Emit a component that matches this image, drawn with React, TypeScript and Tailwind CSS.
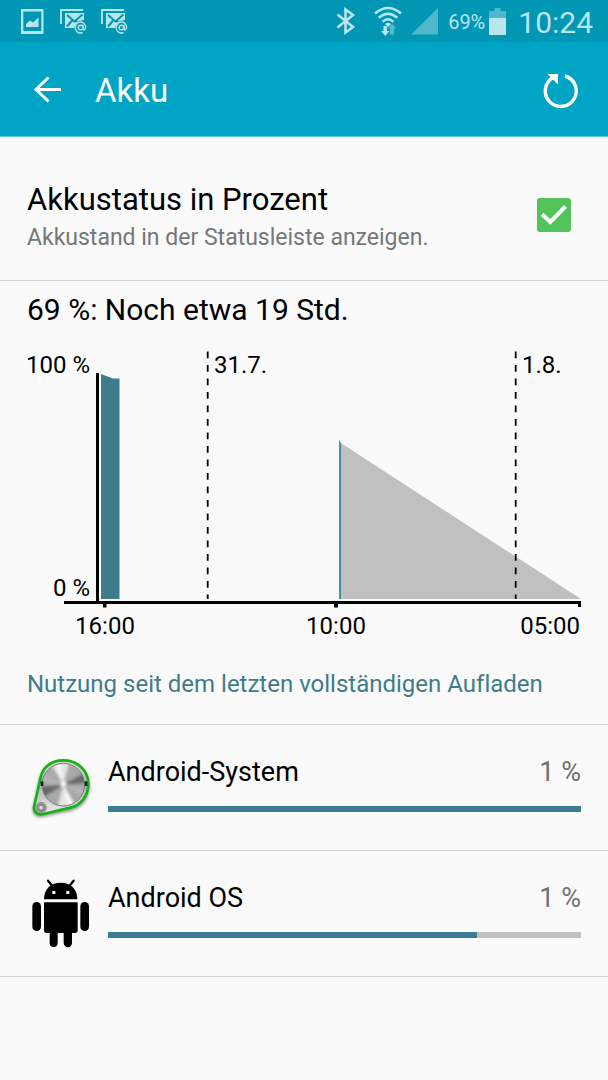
import type { ReactNode } from "react";

function PictureIcon() {
  return (
    <svg viewBox="0 0 23 26" className="h-[26px] w-[23px]" aria-hidden="true">
      <path fill="#b9e5ec" fillRule="evenodd" d="M0 0h22.5v25H0zM2.300 2.500v19.500h18V2.500z" />
      <path fill="#b9e5ec" d="M5 18v-3l4-3.500 3 2L17.500 8.500V18z" />
    </svg>
  );
}

function MailIcon() {
  return (
    <svg viewBox="0 0 27 26" className="h-[26px] w-[27px]" aria-hidden="true">
      <path d="M1 15V1h22" fill="none" stroke="#b9e5ec" strokeWidth="1.800" />
      <path d="M5 4h19v7l-5 1-4 4-1 3H5z" fill="#b9e5ec" />
      <path d="M7 6l7.500 6.500L22.500 5.500M7 17.500l5.500-6.500M15.500 11l1.500 2" fill="none" stroke="#0096b4" strokeWidth="2" />
      <circle cx="20.500" cy="18.500" r="2.300" fill="none" stroke="#b9e5ec" strokeWidth="1.400" />
      <path
        d="M23 15.800v4c0 2 2.600 1.500 2.600-1.500a5.200 5.500 0 1 0-3 5.200"
        fill="none"
        stroke="#b9e5ec"
        strokeWidth="1.400"
      />
    </svg>
  );
}

function BluetoothIcon() {
  return (
    <svg viewBox="0 0 20 28" className="h-7 w-5" aria-hidden="true">
      <path d="M1.500 7.500L17 20l-7.500 5.500v-23L17 8 1.500 20.500" fill="none" stroke="#b9e5ec" strokeWidth="2.600" />
    </svg>
  );
}

function WifiIcon() {
  return (
    <svg viewBox="0 0 28 30" className="h-[30px] w-7" aria-hidden="true">
      <g fill="none" stroke="#b9e5ec" strokeWidth="2.500">
        <path d="M1 7.500q13-11 26 0" />
        <path d="M4.800 11.700q9.200-8 18.400 0" />
        <path d="M8.500 15.800q5.500-5 11 0" />
      </g>
      <path d="M11 18q3-2.500 6 0l-3 3z" fill="#b9e5ec" />
      <path d="M9.500 20h3.500v5h2.500L11.200 30 7 25h2.500z" fill="#b9e5ec" />
      <path d="M18 17.500l4.300 5H20v6h-4v-6h-2z" fill="#56b9cd" />
    </svg>
  );
}

function SignalIcon() {
  return (
    <svg viewBox="0 0 27 27" className="h-[27px] w-[27px]" aria-hidden="true">
      <path d="M0 26.500L27 0v26.500z" fill="#4fb8cc" />
    </svg>
  );
}

function BatteryIcon() {
  return (
    <svg viewBox="0 0 17 27" className="h-[27px] w-[17px]" aria-hidden="true">
      <path d="M0 3h5.500V0h6v3H17v8H0z" fill="#4fb8cc" />
      <path d="M0 10h17v17H0z" fill="#b9e5ec" />
    </svg>
  );
}

function StatusBar() {
  return (
    <div className="flex h-[42px] items-center justify-between bg-[#0096b4] pr-[15px] pl-[21px] text-[#b9e5ec]">
      <div className="flex items-center gap-4 pt-0.5">
        <PictureIcon />
        <div className="flex gap-3.5">
          <MailIcon />
          <MailIcon />
        </div>
      </div>
      <div className="flex items-center">
        <BluetoothIcon />
        <span className="ml-[18px]">
          <WifiIcon />
        </span>
        <span className="ml-[9px]">
          <SignalIcon />
        </span>
        <span className="ml-2.5 pt-0.5 text-[20px] leading-none">69%</span>
        <span className="ml-1">
          <BatteryIcon />
        </span>
        <span className="ml-3 pt-1 text-[30px] leading-none">10:24</span>
      </div>
    </div>
  );
}

function AppBar() {
  return (
    <header className="flex h-[95px] items-center border-b border-[#5cc3d8] bg-[#00a5c6] pt-1 pr-7 pl-8 text-white">
      <button type="button" aria-label="Zurück">
        <svg viewBox="0 0 32 32" className="h-8 w-8" aria-hidden="true">
          <path d="M29 14.500H4M16.500 2.500L4 14.500l12.500 12" fill="none" stroke="white" strokeWidth="3" />
        </svg>
      </button>
      <h1 className="ml-[31px] flex-1 text-[33px] leading-10">Akku</h1>
      <button type="button" aria-label="Aktualisieren">
        <svg viewBox="0 0 38 38" className="h-[38px] w-[38px]" aria-hidden="true">
          <path d="M23 4A15.500 15.500 0 1 1 11 5.500" fill="none" stroke="white" strokeWidth="3.400" />
          <path d="M5.500 2H16V12.500z" fill="white" />
        </svg>
      </button>
    </header>
  );
}

function PercentSetting() {
  return (
    <label className="flex h-[144px] items-center justify-between border-b border-[#d0d0d0] pr-[37px] pl-[27px]">
      <span className="mt-[18px]">
        <span className="block text-[31px] leading-10 text-black">Akkustatus in Prozent</span>
        <span className="block text-[23px] leading-9 text-[#757779]">Akkustand in der Statusleiste anzeigen.</span>
      </span>
      <span className="relative mt-3 h-[34px] w-[34px] shrink-0">
        <input
          type="checkbox"
          defaultChecked
          className="peer block h-[34px] w-[34px] appearance-none rounded-[3px] border-2 border-gray-400 checked:border-[#53c45a] checked:bg-[#53c45a]"
        />
        <svg
          viewBox="0 0 34 34"
          className="pointer-events-none absolute inset-0 hidden h-full w-full peer-checked:block"
          aria-hidden="true"
        >
          <path d="M5 16.200l8.300 7.800L28.500 8.500" fill="none" stroke="white" strokeWidth="4" />
        </svg>
      </span>
    </label>
  );
}

function BatteryChart() {
  return (
    <svg
      viewBox="0 0 608 304"
      className="block w-full text-[24px]"
      role="img"
      aria-label="Akkuverlauf"
      fill="black"
    >
      <path d="M101 34l12 4.500h6.500V259H101z" fill="#3f7c8b" />
      <path d="M340 102.500L581 259H340z" fill="#c0c0c0" />
      <path d="M339.200 100l1.600 3V259h-1.600z" fill="#1d7b92" />
      <path d="M96 33h3v230h-3z" />
      <path d="M64 261h517v6h-3v-3H338v3.500h-4V264H106.500v3.500H103V264H64z" />
      <path d="M207.700 11.500V259M515.700 11.500V259" stroke="black" strokeWidth="1.800" strokeDasharray="6.800 6.700" />
      <text x="90" y="33" textAnchor="end">100 %</text>
      <text x="90" y="256" textAnchor="end">0 %</text>
      <text x="214" y="33">31.7.</text>
      <text x="522" y="33">1.8.</text>
      <text x="105" y="294" textAnchor="middle">16:00</text>
      <text x="336" y="294" textAnchor="middle">10:00</text>
      <text x="580" y="294" textAnchor="end">05:00</text>
    </svg>
  );
}

function SystemIcon() {
  return (
    <svg viewBox="24 36 192 216" className="h-[72px] w-16 shrink-0" aria-hidden="true">
      <defs>
        <filter id="soft" x="-30%" y="-30%" width="160%" height="160%">
          <feGaussianBlur stdDeviation="5" />
        </filter>
        <clipPath id="disc">
          <circle cx="130" cy="134" r="63" />
        </clipPath>
        <linearGradient id="plate" x1="0" y1="0" x2="0" y2="1">
          <stop offset="0" stopColor="#e2e2e2" />
          <stop offset="0.5" stopColor="#b4b4b4" />
          <stop offset="1" stopColor="#eeeeee" />
        </linearGradient>
        <radialGradient id="knob">
          <stop offset="0" stopColor="#ffffff" />
          <stop offset="0.6" stopColor="#777777" />
          <stop offset="1" stopColor="#cccccc" />
        </radialGradient>
      </defs>
      <path
        d="M60 116C67 82 94 61 130 61c43 0 76 32 76 72 0 34-22 62-54 71l-85 18c-16 4-27-7-25-21z"
        fill="#666666"
        stroke="#666666"
        strokeWidth="8"
        filter="url(#soft)"
        opacity="0.7"
        transform="translate(0 5)"
      />
      <path
        d="M62 113C68 82 94 61 130 61c43 0 75 32 75 71 0 35-22 63-54 71l-81 19c-17 4-30-5-28-21z"
        fill="url(#plate)"
        stroke="#12b412"
        strokeWidth="8"
      />
      <g clipPath="url(#disc)">
        <rect x="65" y="70" width="130" height="130" fill="#a8a8a8" />
        <g filter="url(#soft)">
          <path d="M130 134L200 95V128zM130 134L60 140V178z" fill="#686868" />
          <path d="M130 134L60 95V125zM130 134L200 150V175z" fill="#b5b5b5" />
          <path d="M130 134L85 60H150zM130 134L110 210H175z" fill="#e4e4e4" />
          <path d="M130 134L105 60H118zM130 134L150 210H168z" fill="#ffffff" />
        </g>
        <circle cx="130" cy="132" r="8" fill="#ffffff" filter="url(#soft)" />
      </g>
      <circle cx="130" cy="134" r="64" fill="none" stroke="#777777" strokeWidth="3" />
      <path d="M66 124v14M198 124v14" stroke="#222222" strokeWidth="8" />
      <circle cx="63" cy="203" r="16" fill="url(#knob)" stroke="#666666" strokeWidth="2" />
    </svg>
  );
}

function RobotIcon() {
  return (
    <svg viewBox="24 54 192 216" className="h-[72px] w-16 shrink-0" aria-hidden="true">
      <path d="M84 62l13 16M161 62l-13 16" stroke="black" strokeWidth="7" strokeLinecap="round" />
      <path d="M72 118c0-32 21-50 50-50s50 18 50 50z" />
      <rect x="97" y="93" width="9" height="9" fill="white" />
      <rect x="139" y="93" width="9" height="9" fill="white" />
      <path d="M72 127h101v84q0 8-8 8h-9v30a12.500 12.500 0 0 1-25 0v-30h-18v30a12 12 0 0 1-24 0v-30h-9q-8 0-8-8z" />
      <rect x="37" y="126" width="26" height="87" rx="13" />
      <rect x="181" y="126" width="26" height="87" rx="13" />
    </svg>
  );
}

type UsageRowProps = { icon: ReactNode; name: string; percent: string; share: number };

function UsageRow({ icon, name, percent, share }: UsageRowProps) {
  return (
    <li className="flex h-[126px] items-center gap-4 border-b border-[#d0d0d0] pr-[27px] pl-7">
      {icon}
      <div className="flex-1 pb-2">
        <div className="flex justify-between text-[27px] leading-8">
          <span className="text-black">{name}</span>
          <span className="text-[#6f7173]">{percent}</span>
        </div>
        <div className="mt-[18px] h-1.5 bg-[#c0c0c0]">
          <div className="h-full bg-[#3a7d8e]" style={{ width: `${share}%` }} />
        </div>
      </div>
    </li>
  );
}

export default function App() {
  return (
    <div className="min-h-screen bg-[#fafafa] font-['Roboto','Noto_Sans',sans-serif] [font-variant-ligatures:none]">
      <StatusBar />
      <AppBar />
      <main>
        <PercentSetting />
        <h2 className="px-[27px] pt-[9px] text-[30px] leading-10 text-black">69 %: Noch etwa 19 Std.</h2>
        <div className="mt-2.5">
          <BatteryChart />
        </div>
        <h3 className="border-b border-[#d0d0d0] px-[27px] pt-6 pb-6 text-[24px] leading-8 text-[#3f7c8b]">
          Nutzung seit dem letzten vollständigen Aufladen
        </h3>
        <ul>
          <UsageRow icon={<SystemIcon />} name="Android-System" percent="1 %" share={100} />
          <UsageRow icon={<RobotIcon />} name="Android OS" percent="1 %" share={78} />
        </ul>
      </main>
    </div>
  );
}
